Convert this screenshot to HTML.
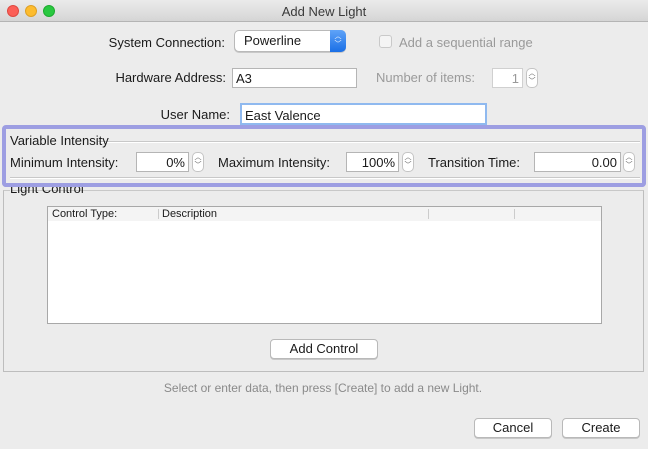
<!DOCTYPE html>
<html><head><meta charset="utf-8"><style>
*{margin:0;padding:0;box-sizing:border-box}
body{width:648px;height:449px;overflow:hidden;background:#ececec;font-family:"Liberation Sans",sans-serif;font-size:13px;color:#1a1a1a;position:relative}
.a{position:absolute;white-space:nowrap}
.tb{left:0;top:0;width:648px;height:22px;background:linear-gradient(#ebebeb,#d5d5d5);border-bottom:1px solid #b4b4b4}
.dot{width:12px;height:12px;border-radius:50%;top:5px}
.f{background:#fff;border:1px solid #b5b5b5}
.sp{width:12px;height:20px;border:1px solid #c4c4c4;border-radius:5px;background:#fff;font-size:7px;line-height:8px;text-align:center;color:#555;padding-top:1px}
.btn{background:#fff;border:1px solid #b9b9b9;border-radius:4px;text-align:center;line-height:18px;box-shadow:0 1px 0 #c8c8c8}
.g{color:#9a9a9a}
</style></head><body>
<div class="a tb"></div>
<div class="a dot" style="left:7px;background:#fc5f57;border:1px solid #de4a42"></div>
<div class="a dot" style="left:25px;background:#fdbc2e;border:1px solid #dea024"></div>
<div class="a dot" style="left:43px;background:#29c840;border:1px solid #1eab30"></div>
<div class="a" style="left:0;width:648px;top:4px;text-align:center;color:#3a3a3a">Add New Light</div>

<div class="a" style="right:423px;top:35px">System Connection:</div>
<div class="a btn" style="left:234px;top:30px;width:112px;height:22px;line-height:20px;text-align:left;padding-left:9px;border-radius:5px">Powerline</div>
<div class="a" style="left:330px;top:30px;width:16px;height:22px;background:linear-gradient(#5fa3f8,#1a6fe6);border-radius:0 5px 5px 0;color:#fff;font-size:7px;line-height:8px;text-align:center;padding-top:3px">︿<br>﹀</div>
<div class="a" style="left:379px;top:35px;width:13px;height:13px;border:1px solid #c9c9c9;border-radius:3px;background:#f4f4f4"></div>
<div class="a g" style="left:399px;top:35px">Add a sequential range</div>

<div class="a" style="right:422px;top:70px">Hardware Address:</div>
<div class="a f" style="left:232px;top:68px;width:125px;height:20px;padding:2px 3px">A3</div>
<div class="a g" style="left:376px;top:70px">Number of items:</div>
<div class="a f" style="left:492px;top:68px;width:31px;height:20px;text-align:right;padding:2px 3px;color:#999;border-color:#d0d0d0">1</div>
<div class="a sp" style="left:526px;top:68px">︿<br>﹀</div>

<div class="a" style="right:418px;top:107px">User Name:</div>
<div class="a f" style="left:240px;top:103px;width:247px;height:22px;padding:3px 3px;border:2px solid #8fb9ef">East Valence</div>

<div class="a" style="left:2px;top:125px;width:644px;height:62px;border:4px solid #9d9ee2;border-radius:4px"></div>
<div class="a" style="left:98px;top:141px;width:542px;border-top:1px solid #c8c8c8;border-bottom:1px solid #fff"></div>
<div class="a" style="left:10px;top:133px">Variable Intensity</div>
<div class="a" style="left:10px;top:177px;width:630px;border-top:1px solid #c8c8c8;border-bottom:1px solid #fff"></div>
<div class="a" style="left:10px;top:155px">Minimum Intensity:</div>
<div class="a f" style="left:136px;top:152px;width:53px;height:20px;text-align:right;padding:2px 3px">0%</div>
<div class="a sp" style="left:192px;top:152px">︿<br>﹀</div>
<div class="a" style="left:218px;top:155px">Maximum Intensity:</div>
<div class="a f" style="left:346px;top:152px;width:53px;height:20px;text-align:right;padding:2px 3px">100%</div>
<div class="a sp" style="left:402px;top:152px">︿<br>﹀</div>
<div class="a" style="left:428px;top:155px">Transition Time:</div>
<div class="a f" style="left:534px;top:152px;width:87px;height:20px;text-align:right;padding:2px 3px">0.00</div>
<div class="a sp" style="left:623px;top:152px">︿<br>﹀</div>

<div class="a" style="left:3px;top:190px;width:641px;height:182px;border:1px solid #bdbdbd;border-top-color:#c8c8c8"></div>
<div class="a" style="left:10px;top:182px;background:#ececec;padding:0 1px;height:9px;overflow:hidden;line-height:18px;clip-path:inset(4px 0 0 0)"></div>
<div class="a" style="left:3px;top:187px;width:642px;height:3px;background:#ececec"></div>
<div class="a" style="left:10px;top:181px;height:15px;overflow:hidden"><div style="margin-top:0">Light Control</div></div>
<div class="a" style="left:2px;top:181px;width:644px;height:5px;border:0;border-top:0;background:transparent;box-shadow:none"></div>
<div class="a" style="left:2px;top:183px;width:644px;height:4px;background:#9d9ee2;border-radius:0 0 4px 4px"></div>

<div class="a" style="left:47px;top:206px;width:555px;height:118px;background:#fff;border:1px solid #a8a8a8"></div>
<div class="a" style="left:48px;top:207px;width:553px;height:14px;background:#f4f4f4;font-size:11px;line-height:14px">
<span class="a" style="left:4px">Control Type:</span>
<span class="a" style="left:110px;top:2px;height:10px;border-left:1px solid #ccc"></span>
<span class="a" style="left:114px">Description</span>
<span class="a" style="left:380px;top:2px;height:10px;border-left:1px solid #ccc"></span>
<span class="a" style="left:466px;top:2px;height:10px;border-left:1px solid #ccc"></span>
</div>

<div class="a btn" style="left:270px;top:339px;width:108px;height:20px">Add Control</div>
<div class="a g" style="left:0;width:646px;top:381px;text-align:center;font-size:12px;color:#8a8a8a">Select or enter data, then press [Create] to add a new Light.</div>
<div class="a btn" style="left:474px;top:418px;width:78px;height:20px">Cancel</div>
<div class="a btn" style="left:562px;top:418px;width:78px;height:20px">Create</div>
</body></html>
